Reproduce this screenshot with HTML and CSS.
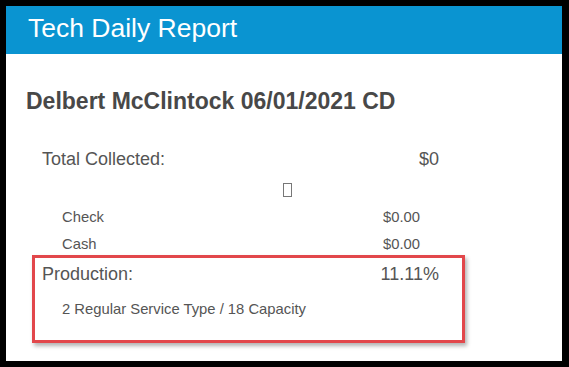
FILE: index.html
```html
<!DOCTYPE html>
<html lang="en">
<head>
    <meta charset="UTF-8">
    <meta name="viewport" content="width=device-width, initial-scale=1.0">
    <title>Tech Daily Report</title>
    <link rel="stylesheet" href="styles.css">
</head>
<body>
    <div class="report">
        <!-- Header -->
        <div class="report-header">Tech Daily Report</div>

        <div class="report-body">
            <h2 class="tech-name">Delbert McClintock 06/01/2021 CD</h2>

            <!-- Collections -->
            <div class="row main-row">
                <span>Total Collected:</span>
                <span>$0</span>
            </div>
            <div class="glyph-row"><span class="missing-glyph"></span></div>
            <div class="row sub-row">
                <span>Check</span>
                <span>$0.00</span>
            </div>
            <div class="row sub-row">
                <span>Cash</span>
                <span>$0.00</span>
            </div>

            <!-- Production -->
            <div class="row main-row production">
                <span>Production:</span>
                <span>11.11%</span>
            </div>
            <div class="row sub-row detail">
                <span>2 Regular Service Type / 18 Capacity</span>
            </div>

            <!-- Highlight -->
            <div class="highlight"></div>
        </div>
    </div>
</body>
</html>
```

FILE: styles.css
```css
body {
    margin: 0;
    background-color: #000;
    font-family: "Liberation Sans", Arial, sans-serif;
}

.report {
    margin: 6px 7px 6px 6px;
    height: 355px;
    background-color: #fff;
}

.report-header {
    height: 48px;
    box-sizing: border-box;
    padding: 0 0 3px 22px;
    line-height: 45px;
    font-size: 26.5px;
    color: #fff;
    background-color: #0a94d1;
}

.report-body {
    position: relative;
    padding: 33px 123px 0 36px;
}

.tech-name {
    margin: 0 0 32px -16px;
    font-size: 23px;
    line-height: 28px;
    color: #484848;
}

.row {
    display: flex;
    justify-content: space-between;
    color: #555;
}

.main-row {
    font-size: 18px;
    line-height: 24px;
}

.sub-row {
    font-size: 14.8px;
    line-height: 27px;
    padding: 0 19px 0 20px;
}

.glyph-row {
    height: 33px;
    padding-left: 241px;
}

.missing-glyph {
    display: inline-block;
    width: 7px;
    height: 12px;
    margin-top: 12px;
    border: 1px solid #777;
}

.production {
    margin-top: 4px;
}

.detail {
    margin-top: 10px;
}

/* Red annotation box */
.highlight {
    position: absolute;
    left: 26px;
    top: 201px;
    width: 433px;
    height: 88px;
    box-sizing: border-box;
    border: 3px solid #e2474b;
    box-shadow: 2px 3px 4px rgba(0, 0, 0, 0.3);
}
```
